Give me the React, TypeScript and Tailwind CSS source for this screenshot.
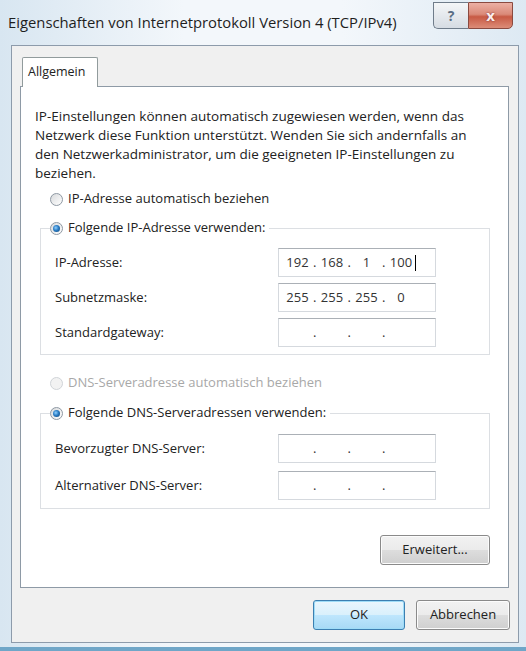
import React from "react";

const Radio = ({
  checked = false,
  disabled = false,
}: {
  checked?: boolean;
  disabled?: boolean;
}) => (
  <span
    className={`flex h-[13px] w-[13px] shrink-0 items-center justify-center rounded-full border ${
      disabled
        ? "border-[#d0d4d8] bg-[#f2f2f2]"
        : "border-[#8e98a3] bg-[linear-gradient(135deg,#d8dadc,#ffffff)]"
    }`}
  >
    {checked && (
      <span className="h-[7px] w-[7px] rounded-full bg-[radial-gradient(circle_at_40%_40%,#8fd0ff_0%,#2a7cc4_45%,#0d3f70_100%)]" />
    )}
  </span>
);

const RadioRow = ({
  label,
  checked,
  disabled,
}: {
  label: string;
  checked?: boolean;
  disabled?: boolean;
}) => (
  <div className="flex h-[20px] items-center gap-[5px]">
    <Radio checked={checked} disabled={disabled} />
    <span className={disabled ? "text-[#a8a8a8]" : "text-[#222]"}>
      {label}
    </span>
  </div>
);

const IpField = ({
  octets = ["", "", "", ""],
  caret = false,
}: {
  octets?: string[];
  caret?: boolean;
}) => (
  <div className="flex h-[29px] w-[158px] items-center border border-[#d5d9de] border-t-[#abb0b6] bg-white pl-[5px] text-[#333]">
    {octets.map((o, i) => (
      <React.Fragment key={i}>
        <span className="relative w-[27px] text-center">
          {o}
          {caret && i === 3 && (
            <span className="absolute -right-[1px] top-[2px] h-[16px] w-px bg-black" />
          )}
        </span>
        {i < 3 && <span className="w-[7.5px] text-center">.</span>}
      </React.Fragment>
    ))}
  </div>
);

const FieldRow = ({ label, children }: { label: string; children: React.ReactNode }) => (
  <div className="flex items-center">
    <span className="w-[223px] text-[#222]">{label}</span>
    {children}
  </div>
);

const WinButton = ({
  children,
  focused = false,
  className = "",
}: {
  children: React.ReactNode;
  focused?: boolean;
  className?: string;
}) => (
  <button
    className={`flex h-[30px] items-center justify-center rounded-[3px] border text-[#222] ${
      focused
        ? "border-[#3c7fb1] bg-[linear-gradient(#eaf6fd_0%,#d9f0fc_50%,#bee6fd_51%,#a7d9f5_100%)] shadow-[inset_0_0_0_1px_#9fdcf7]"
        : "border-[#8a8a8a] bg-[linear-gradient(#f2f2f2_0%,#ebebeb_50%,#dddddd_51%,#cfcfcf_100%)] shadow-[inset_0_0_0_1px_#fcfcfc]"
    } ${className}`}
  >
    {children}
  </button>
);

export default function App() {
  return (
    <div className="relative flex h-[651px] w-[526px] flex-col bg-[linear-gradient(90deg,#d8e6f1,#f3f7fb_35%,#f3f7fb_65%,#dde9f3)] font-['Open_Sans',sans-serif] text-[13px]">
      {/* title bar */}
      <div className="flex h-[45px] items-center pl-[8px] text-[14.8px] text-[#1e1e1e]">
        Eigenschaften von Internetprotokoll Version 4 (TCP/IPv4)
      </div>
      <div className="absolute right-[13px] top-[2px] flex">
        <div className="flex h-[27px] w-[35px] items-center justify-center rounded-bl-[5px] border border-r-0 border-[#6f7c8a] bg-[linear-gradient(#f4f6f8,#d6dce3)] text-[14px] font-bold text-[#5a6e84]">
          ?
        </div>
        <div className="flex h-[27px] w-[45px] items-center justify-center rounded-br-[5px] border border-[#8a4a40] bg-[linear-gradient(#ecb0a4_0%,#da8a79_45%,#c85a44_55%,#dc8c78_100%)] text-[15px] font-bold text-[#fbeeee] [text-shadow:0_0_2px_#7a2e24]">
          x
        </div>
      </div>

      <div className="flex flex-1">
        <div className="w-[11px]" />
        <div className="flex h-[598px] w-[508px] flex-col border border-[#8d9bab] bg-[#f0f0f0] pl-[8px] pt-[11px]">
          {/* tab */}
          <div className="relative z-10 ml-[2px] flex h-[30px] w-[76px] items-center rounded-t-[2px] border border-b-0 border-[#919b9c] bg-white pl-[5px] text-[12.5px] text-[#222]">
            Allgemein
          </div>
          <div className="-mt-px flex h-[502px] w-[489px] flex-col border border-[#8e9aa6] bg-white pl-[14px] pt-[20px]">
            <p className="text-[13.5px] leading-[19px] text-[#222]">
              IP-Einstellungen können automatisch zugewiesen werden, wenn das
              <br />
              Netzwerk diese Funktion unterstützt. Wenden Sie sich andernfalls an
              <br />
              den Netzwerkadministrator, um die geeigneten IP-Einstellungen zu
              <br />
              beziehen.
            </p>

            <div className="ml-[15px] mt-[6px]">
              <RadioRow label="IP-Adresse automatisch beziehen" />
            </div>

            <fieldset className="ml-[5px] mt-[9px] w-[450px] border border-[#dcdfe3] px-[14px] pb-[7px] pt-[10px]">
              <legend className="-ml-[5px] bg-white pr-[4px]">
                <RadioRow label="Folgende IP-Adresse verwenden:" checked />
              </legend>
              <div className="flex flex-col gap-[6px]">
                <FieldRow label="IP-Adresse:">
                  <IpField octets={["192", "168", "1", "100"]} caret />
                </FieldRow>
                <FieldRow label="Subnetzmaske:">
                  <IpField octets={["255", "255", "255", "0"]} />
                </FieldRow>
                <FieldRow label="Standardgateway:">
                  <IpField />
                </FieldRow>
              </div>
            </fieldset>

            <div className="ml-[15px] mt-[18px]">
              <RadioRow label="DNS-Serveradresse automatisch beziehen" disabled />
            </div>

            <fieldset className="ml-[5px] mt-[10px] w-[450px] border border-[#dcdfe3] px-[14px] pb-[8px] pt-[11px]">
              <legend className="-ml-[5px] bg-white pr-[4px]">
                <RadioRow label="Folgende DNS-Serveradressen verwenden:" checked />
              </legend>
              <div className="flex flex-col gap-[8px]">
                <FieldRow label="Bevorzugter DNS-Server:">
                  <IpField />
                </FieldRow>
                <FieldRow label="Alternativer DNS-Server:">
                  <IpField />
                </FieldRow>
              </div>
            </fieldset>

            <div className="ml-[5px] mt-[26px] flex w-[450px] justify-end">
              <WinButton className="h-[29px] w-[110px]">Erweitert...</WinButton>
            </div>
          </div>

          <div className="mt-[12px] flex w-[490px] justify-end gap-[11px]">
            <WinButton focused className="w-[92px]">
              OK
            </WinButton>
            <WinButton className="w-[94px]">Abbrechen</WinButton>
          </div>
        </div>
      </div>
      <div className="h-[4px] bg-[#6fa6c8]" />
    </div>
  );
}
